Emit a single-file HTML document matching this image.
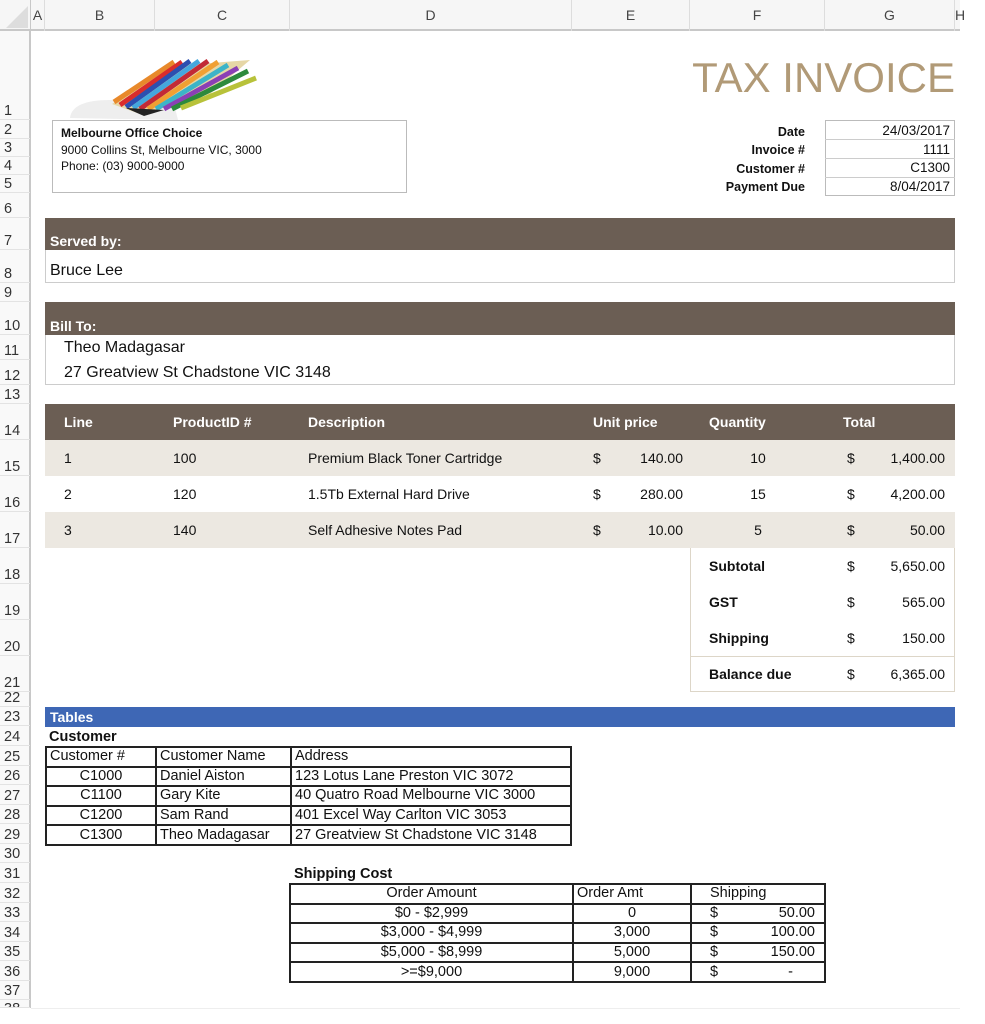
<!DOCTYPE html>
<html><head><meta charset="utf-8"><style>
*{margin:0;padding:0;box-sizing:border-box}
body{width:985px;height:1024px;background:#fff;position:relative;overflow:hidden;font-family:"Liberation Sans",Arial,sans-serif;color:#111}
.a{position:absolute;white-space:nowrap}
.rl{position:absolute;left:0;width:30px;height:18px;line-height:18px;font-size:14.5px;color:#333;padding-left:4px;border-bottom:1px solid #e3e3e3}
.ch{position:absolute;top:0;height:31px;line-height:30px;font-size:14px;color:#444;text-align:center;border-right:1px solid #ddd}
.b{font-weight:bold}
.w{color:#fff;font-weight:bold;font-size:14px}
.it{position:absolute;top:440px;font-size:14px;line-height:36px;white-space:nowrap}
table{position:absolute;border-collapse:collapse;font-size:14.5px}
td{border:2px solid #222;padding:0 3px;height:19.6px;line-height:15px;white-space:nowrap}
</style></head><body>
<div class="a" style="left:0;top:0;width:960px;height:31px;background:#f6f6f6;border-bottom:2px solid #c8c8c8"></div>
<svg class="a" style="left:4px;top:4px" width="24" height="24"><polygon points="24,2 24,24 2,24" fill="#ddd"/></svg>
<div class="ch" style="left:30px;width:15px;border-left:1px solid #c8c8c8">A</div>
<div class="ch" style="left:45px;width:110px">B</div>
<div class="ch" style="left:155px;width:135px">C</div>
<div class="ch" style="left:290px;width:282px">D</div>
<div class="ch" style="left:572px;width:118px">E</div>
<div class="ch" style="left:690px;width:135px">F</div>
<div class="ch" style="left:825px;width:130px">G</div>
<div class="ch" style="left:955px;width:8px;text-align:left;border:none">H</div>
<div class="a" style="left:0;top:31px;width:31px;height:977px;background:#f9f9f9;border-right:2px solid #c8c8c8"></div>
<div class="rl" style="top:102px">1</div><div class="rl" style="top:121px">2</div><div class="rl" style="top:139px">3</div><div class="rl" style="top:157px">4</div><div class="rl" style="top:175px">5</div><div class="rl" style="top:200px">6</div><div class="rl" style="top:232px">7</div><div class="rl" style="top:265px">8</div><div class="rl" style="top:284px">9</div><div class="rl" style="top:317px">10</div><div class="rl" style="top:342px">11</div><div class="rl" style="top:367px">12</div><div class="rl" style="top:386px">13</div><div class="rl" style="top:422px">14</div><div class="rl" style="top:458px">15</div><div class="rl" style="top:494px">16</div><div class="rl" style="top:530px">17</div><div class="rl" style="top:566px">18</div><div class="rl" style="top:602px">19</div><div class="rl" style="top:638px">20</div><div class="rl" style="top:674px">21</div><div class="rl" style="top:689px">22</div><div class="rl" style="top:708px">23</div><div class="rl" style="top:728px">24</div><div class="rl" style="top:748px">25</div><div class="rl" style="top:767px">26</div><div class="rl" style="top:787px">27</div><div class="rl" style="top:806px">28</div><div class="rl" style="top:826px">29</div><div class="rl" style="top:845px">30</div><div class="rl" style="top:865px">31</div><div class="rl" style="top:885px">32</div><div class="rl" style="top:904px">33</div><div class="rl" style="top:924px">34</div><div class="rl" style="top:943px">35</div><div class="rl" style="top:963px">36</div><div class="rl" style="top:982px">37</div><div class="rl" style="top:1000px;height:8px;overflow:hidden;line-height:18px">38</div>
<div class="a" style="left:31px;top:1008px;width:929px;height:1px;background:#eee"></div>
<!-- logo -->
<svg class="a" style="left:60px;top:38px" width="210" height="82">
<path d="M10,80 Q12,62 50,62 L112,58 L118,82 Z" fill="#eeeeee"/>
<path d="M52,66 L112,28 L190,22 L150,56 L80,76 Z" fill="#e6d7a6"/>
<g stroke-width="5" fill="none">
<line x1="54" y1="64" x2="114" y2="24" stroke="#e8892b"/>
<line x1="60" y1="67" x2="122" y2="24" stroke="#d92c2c"/>
<line x1="66" y1="69" x2="130" y2="23" stroke="#2c4fb0"/>
<line x1="73" y1="70" x2="139" y2="23" stroke="#44a7dd"/>
<line x1="80" y1="71" x2="148" y2="23" stroke="#c22a36"/>
<line x1="88" y1="71" x2="158" y2="24" stroke="#f0a033"/>
<line x1="96" y1="71" x2="168" y2="27" stroke="#3cb4c8"/>
<line x1="104" y1="71" x2="178" y2="30" stroke="#8b3fb5"/>
<line x1="112" y1="71" x2="188" y2="33" stroke="#2d8a3c"/>
<line x1="121" y1="70" x2="196" y2="40" stroke="#b8c23a"/>
</g>
<path d="M66,70 L104,72 L84,78 Z" fill="#222"/>
</svg>
<div class="a" style="left:52px;top:120px;width:355px;height:73px;border:1px solid #bbb"></div>
<div class="a b" style="left:61px;top:126px;font-size:12px">Melbourne Office Choice</div>
<div class="a" style="left:61px;top:143px;font-size:12px">9000 Collins St, Melbourne VIC, 3000</div>
<div class="a" style="left:61px;top:159px;font-size:12px">Phone: (03) 9000-9000</div>
<div class="a" style="right:30px;top:54px;font-size:42px;color:#b19a77">TAX INVOICE</div>
<div class="a b" style="right:180px;top:123px;font-size:12.5px;text-align:right;line-height:18.3px">Date<br>Invoice #<br>Customer #<br>Payment Due</div>
<div class="a" style="left:825px;top:120px;width:130px;height:76px;border:1px solid #bbb"></div>
<div class="a" style="left:825px;top:139px;width:130px;height:1px;background:#ccc"></div>
<div class="a" style="left:825px;top:158px;width:130px;height:1px;background:#ccc"></div>
<div class="a" style="left:825px;top:177px;width:130px;height:1px;background:#ccc"></div>
<div class="a" style="right:35px;top:122px;font-size:13.5px;text-align:right;line-height:18.7px">24/03/2017<br>1111<br>C1300<br>8/04/2017</div>
<div class="a" style="left:45px;top:218px;width:910px;height:32px;background:#6b5e54"></div>
<div class="a w" style="left:50px;top:233px">Served by:</div>
<div class="a" style="left:45px;top:250px;width:910px;height:33px;border:1px solid #ccc;border-top:none"></div>
<div class="a" style="left:50px;top:262px;font-size:16px">Bruce Lee</div>
<div class="a" style="left:45px;top:302px;width:910px;height:33px;background:#6b5e54"></div>
<div class="a w" style="left:50px;top:318px">Bill To:</div>
<div class="a" style="left:45px;top:335px;width:910px;height:50px;border:1px solid #ccc;border-top:none"></div>
<div class="a" style="left:64px;top:339px;font-size:16px">Theo Madagasar</div>
<div class="a" style="left:64px;top:364px;font-size:16px">27 Greatview St Chadstone VIC 3148</div>
<div class="a" style="left:45px;top:404px;width:910px;height:36px;background:#6b5e54"></div>
<div class="a w" style="left:64px;top:414px">Line</div>
<div class="a w" style="left:173px;top:414px">ProductID #</div>
<div class="a w" style="left:308px;top:414px">Description</div>
<div class="a w" style="left:593px;top:414px">Unit price</div>
<div class="a w" style="left:709px;top:414px">Quantity</div>
<div class="a w" style="left:843px;top:414px">Total</div>
<div class="a" style="left:45px;top:440px;width:910px;height:36px;background:#ece8e1"></div>
<div class="a" style="left:45px;top:512px;width:910px;height:36px;background:#ece8e1"></div>
<div class="it" style="left:64px">1<br>2<br>3</div>
<div class="it" style="left:173px">100<br>120<br>140</div>
<div class="it" style="left:308px">Premium Black Toner Cartridge<br>1.5Tb External Hard Drive<br>Self Adhesive Notes Pad</div>
<div class="it" style="left:593px">$<br>$<br>$</div>
<div class="it" style="right:302px;text-align:right">140.00<br>280.00<br>10.00</div>
<div class="it" style="left:738px;width:40px;text-align:center">10<br>15<br>5</div>
<div class="it" style="left:847px">$<br>$<br>$<br>$<br>$<br>$<br>$</div>
<div class="it" style="right:40px;text-align:right">1,400.00<br>4,200.00<br>50.00<br>5,650.00<br>565.00<br>150.00<br>6,365.00</div>
<div class="a" style="left:690px;top:548px;width:265px;height:144px;border:1px solid #ddd6c8;border-top:none"></div>
<div class="a" style="left:690px;top:656px;width:265px;height:1px;background:#ddd6c8"></div>
<div class="it b" style="left:709px;top:548px">Subtotal<br>GST<br>Shipping<br>Balance due</div>
<div class="a" style="left:45px;top:707px;width:910px;height:20px;background:#3e67b5"></div>
<div class="a w" style="left:50px;top:709px">Tables</div>
<div class="a b" style="left:49px;top:729px;font-size:14.5px">Customer</div>
<table style="left:45px;top:746px;width:527px">
<tr><td style="width:110px">Customer #</td><td style="width:135px">Customer Name</td><td>Address</td></tr>
<tr><td style="text-align:center">C1000</td><td>Daniel Aiston</td><td>123 Lotus Lane Preston VIC 3072</td></tr>
<tr><td style="text-align:center">C1100</td><td>Gary Kite</td><td>40 Quatro Road Melbourne VIC 3000</td></tr>
<tr><td style="text-align:center">C1200</td><td>Sam Rand</td><td>401 Excel Way Carlton VIC 3053</td></tr>
<tr><td style="text-align:center">C1300</td><td>Theo Madagasar</td><td>27 Greatview St Chadstone VIC 3148</td></tr>
</table>
<div class="a b" style="left:294px;top:866px;font-size:14.5px">Shipping Cost</div>
<table style="left:289px;top:883px;width:537px">
<tr><td style="width:283px;text-align:center">Order Amount</td><td style="width:118px">Order Amt</td><td style="padding-left:18px">Shipping</td></tr>
<tr><td style="text-align:center">$0 - $2,999</td><td style="text-align:center">0</td><td style="padding-left:18px">$<span style="float:right;padding-right:6px">50.00</span></td></tr>
<tr><td style="text-align:center">$3,000 - $4,999</td><td style="text-align:center">3,000</td><td style="padding-left:18px">$<span style="float:right;padding-right:6px">100.00</span></td></tr>
<tr><td style="text-align:center">$5,000 - $8,999</td><td style="text-align:center">5,000</td><td style="padding-left:18px">$<span style="float:right;padding-right:6px">150.00</span></td></tr>
<tr><td style="text-align:center">&gt;=$9,000</td><td style="text-align:center">9,000</td><td style="padding-left:18px">$<span style="float:right;padding-right:28px">-</span></td></tr>
</table>
</body></html>
